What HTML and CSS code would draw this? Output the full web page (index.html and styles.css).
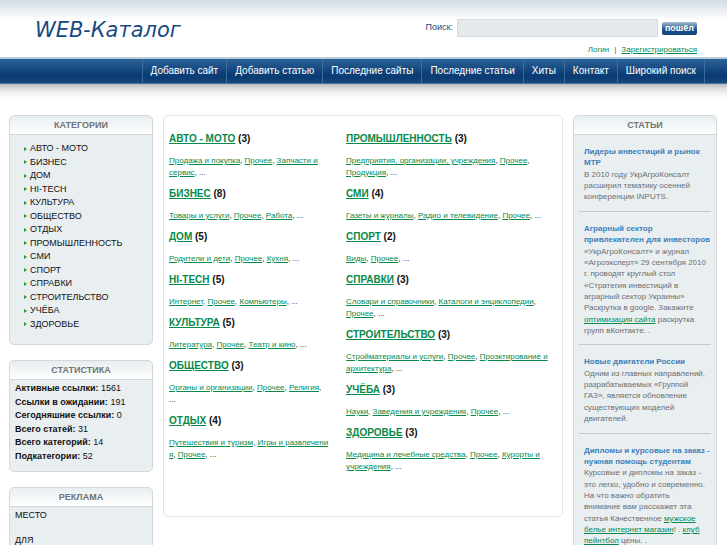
FILE: index.html
```html
<!DOCTYPE html>
<html lang="ru">
<head>
<meta charset="utf-8">
<title>WEB-Каталог</title>
<link rel="stylesheet" href="styles.css">
</head>
<body>
<header class="header">
  <h1 class="logo">WEB-Каталог</h1>
  <div class="tools">
    <form class="search">
      <label for="q">Поиск:</label>
      <input id="q" type="text" name="q">
      <button type="submit">пошёл</button>
    </form>
    <div class="account"><a class="plain" href="#">Логин</a><span>|</span><a href="#">Зарегистрироваться</a></div>
  </div>
</header>
<nav class="nav">
  <a href="#">Добавить сайт</a>
  <a href="#">Добавить статью</a>
  <a href="#">Последние сайты</a>
  <a href="#">Последние статьи</a>
  <a href="#">Хиты</a>
  <a href="#">Контакт</a>
  <a href="#">Широкий поиск</a>
</nav>
<div class="page">
  <aside class="side">
    <section class="box">
      <h2>КАТЕГОРИИ</h2>
      <ul class="cats">
        <li><a href="#">АВТО - МОТО</a></li>
        <li><a href="#">БИЗНЕС</a></li>
        <li><a href="#">ДОМ</a></li>
        <li><a href="#">HI-TECH</a></li>
        <li><a href="#">КУЛЬТУРА</a></li>
        <li><a href="#">ОБЩЕСТВО</a></li>
        <li><a href="#">ОТДЫХ</a></li>
        <li><a href="#">ПРОМЫШЛЕННОСТЬ</a></li>
        <li><a href="#">СМИ</a></li>
        <li><a href="#">СПОРТ</a></li>
        <li><a href="#">СПРАВКИ</a></li>
        <li><a href="#">СТРОИТЕЛЬСТВО</a></li>
        <li><a href="#">УЧЁБА</a></li>
        <li><a href="#">ЗДОРОВЬЕ</a></li>
      </ul>
    </section>
    <section class="box">
      <h2>СТАТИСТИКА</h2>
      <ul class="stats">
        <li><b>Активные ссылки:</b> 1561</li>
        <li><b>Ссылки в ожидании:</b> 191</li>
        <li><b>Сегодняшние ссылки:</b> 0</li>
        <li><b>Всего статей:</b> 31</li>
        <li><b>Всего категорий:</b> 14</li>
        <li><b>Подкатегории:</b> 52</li>
      </ul>
    </section>
    <section class="box">
      <h2>РЕКЛАМА</h2>
      <div class="ads">
        <p>МЕСТО</p>
        <p>ДЛЯ</p>
      </div>
    </section>
  </aside>
  <main class="directory">
    <div class="col">
      <h3><a href="#">АВТО - МОТО</a> (3)</h3>
      <p><a href="#">Продажа и покупка</a>, <a href="#">Прочее</a>, <a href="#">Запчасти и<br>сервис</a>, ...</p>
      <h3><a href="#">БИЗНЕС</a> (8)</h3>
      <p><a href="#">Товары и услуги</a>, <a href="#">Прочее</a>, <a href="#">Работа</a>, ...</p>
      <h3><a href="#">ДОМ</a> (5)</h3>
      <p><a href="#">Родители и дети</a>, <a href="#">Прочее</a>, <a href="#">Кухня</a>, ...</p>
      <h3><a href="#">HI-TECH</a> (5)</h3>
      <p><a href="#">Интернет</a>, <a href="#">Прочее</a>, <a href="#">Компьютеры</a>, ...</p>
      <h3><a href="#">КУЛЬТУРА</a> (5)</h3>
      <p><a href="#">Литература</a>, <a href="#">Прочее</a>, <a href="#">Театр и кино</a>, ...</p>
      <h3><a href="#">ОБЩЕСТВО</a> (3)</h3>
      <p><a href="#">Органы и организации</a>, <a href="#">Прочее</a>, <a href="#">Религия</a>,<br>...</p>
      <h3><a href="#">ОТДЫХ</a> (4)</h3>
      <p><a href="#">Путешествия и туризм</a>, <a href="#">Игры и развлечени<br>я</a>, <a href="#">Прочее</a>, ...</p>
    </div>
    <div class="col">
      <h3><a href="#">ПРОМЫШЛЕННОСТЬ</a> (3)</h3>
      <p><a href="#">Предприятия, организации, учреждения</a>, <a href="#">Прочее</a>,<br><a href="#">Продукция</a>, ...</p>
      <h3><a href="#">СМИ</a> (4)</h3>
      <p><a href="#">Газеты и журналы</a>, <a href="#">Радио и телевидение</a>, <a href="#">Прочее</a>, ...</p>
      <h3><a href="#">СПОРТ</a> (2)</h3>
      <p><a href="#">Виды</a>, <a href="#">Прочее</a>, ...</p>
      <h3><a href="#">СПРАВКИ</a> (3)</h3>
      <p><a href="#">Словари и справочники</a>, <a href="#">Каталоги и энциклопедии</a>,<br><a href="#">Прочее</a>, ...</p>
      <h3><a href="#">СТРОИТЕЛЬСТВО</a> (3)</h3>
      <p><a href="#">Стройматериалы и услуги</a>, <a href="#">Прочее</a>, <a href="#">Проэктирование и<br>архитектура</a>, ...</p>
      <h3><a href="#">УЧЁБА</a> (3)</h3>
      <p><a href="#">Науки</a>, <a href="#">Заведения и учреждения</a>, <a href="#">Прочее</a>, ...</p>
      <h3><a href="#">ЗДОРОВЬЕ</a> (3)</h3>
      <p><a href="#">Медицина и лечебные средства</a>, <a href="#">Прочее</a>, <a href="#">Курорты и<br>учреждения</a>, ...</p>
    </div>
  </main>
  <aside class="side">
    <section class="box">
      <h2>СТАТЬИ</h2>
      <div class="articles">
        <article><h4>Лидеры инвестиций и рынок<br>МТР</h4>
          <p>В 2010 году УкрАгроКонсалт<br>расширил тематику осенней<br>конференции INPUTS.</p></article>
        <article><h4>Аграрный сектор<br>привлекателен для инвесторов</h4>
          <p>«УкрАгроКонсалт» и журнал<br>«Агроэксперт» 29 сентября 2010<br>г. проводят круглый стол<br>«Стратегия инвестиций в<br>аграрный сектор Украины»<br>Раскрутка в google. Закажите<br><a href="#">оптимизация сайта</a> раскрутка<br>групп вКонтакте. .</p></article>
        <article><h4>Новые двигатели России</h4>
          <p>Одним из главных направлений,<br>разрабатываемых «Группой<br>ГАЗ», является обновление<br>существующих моделей<br>двигателей.</p></article>
        <article><h4>Дипломы и курсовые на заказ -<br>нужная помощь студентам</h4>
          <p>Курсовые и дипломы на заказ -<br>это легко, удобно и современно.<br>На что важно обратить<br>внимание вам расскажет эта<br>статья Качественное <a href="#">мужское<br>белье интернет магазин</a>! . <a href="#">клуб<br>пейнтбол</a> цены. .</p></article>
      </div>
    </section>
  </aside>
</div>
</body>
</html>
```
FILE: styles.css
```css
* { box-sizing: border-box; }
html { height: 100%; overflow: hidden; }
body {
  margin: 0;
  font: 9px/1.5 "Liberation Sans", Arial, sans-serif;
  color: #111;
  background: #fff;
}
h1, h2, h3, h4, p, ul { margin: 0; padding: 0; }
ul { list-style: none; }
a { color: #078a4b; }

.header {
  display: flex;
  justify-content: space-between;
  height: 57px;
  padding: 19px 30px 0 35px;
  background: linear-gradient(#d2dce4, #fff 20px);
}
.logo {
  font: italic 21px/23px "DejaVu Sans", sans-serif;
  color: #174a80;
}
.search { display: flex; align-items: center; color: #174a80; }
.search input {
  width: 201px;
  height: 18px;
  margin: 0 4px;
  border: 1px solid #d3dce3;
  background: #e3e9ed;
}
.search button {
  width: 35px;
  height: 13px;
  padding: 0;
  border: 0;
  border-radius: 2px;
  font: bold 9px/12px "Liberation Sans", Arial, sans-serif;
  color: #fff;
  background: linear-gradient(#a9bdd1, #1d4f86 60%, #124680);
}
.account {
  display: flex;
  justify-content: flex-end;
  gap: 5px;
  margin-top: 7px;
  font-size: 8px;
  color: #078a4b;
}
.plain { text-decoration: none; }

.nav {
  display: flex;
  justify-content: flex-end;
  height: 27px;
  padding-right: 22px;
  border-top: 2px solid #b5cadb;
  border-bottom: 1px solid #4d7299;
  background: linear-gradient(#2b6296, #0d3f76 60%, #0b3d74 80%, #174b82);
}
.nav a {
  padding: 0 8px;
  border-left: 1px solid #3c6c9b;
  font-size: 10px;
  line-height: 24px;
  color: #fff;
  text-decoration: none;
}
.nav a:last-child { border-right: 1px solid #3c6c9b; }

.page {
  display: flex;
  align-items: flex-start;
  gap: 10px;
  padding: 31px 10px 0 9px;
  background: linear-gradient(#bcbaba, #e3e2e2 5px, #f4f5f5 10px, #fff 17px);
}
.side { flex: 0 0 144px; }
.box {
  margin-bottom: 15px;
  border: 1px solid #d5d8da;
  border-radius: 5px;
  background: #e9eef1;
}
.box h2 {
  height: 19px;
  border-bottom: 1px solid #cfd5d9;
  border-radius: 5px 5px 0 0;
  font-size: 9px;
  line-height: 19px;
  text-align: center;
  color: #6f7375;
  background: linear-gradient(#e7edf0, #fff);
}
.cats { padding: 7px 0 13px 14px; }
.cats li { display: flex; align-items: center; gap: 3px; }
.cats li::before {
  content: "";
  border: 2px solid transparent;
  border-left: 3px solid #2e9440;
  border-right: 0;
}
.cats a { color: #111; text-decoration: none; }
.stats { padding: 2px 5px 8px; }
.ads { padding: 2px 5px; }
.ads p { margin-bottom: 11px; }

.directory {
  flex: 1;
  display: flex;
  min-width: 0;
  min-height: 402px;
  padding: 17px 5px 0;
  border: 1px solid #e2e4e5;
  border-radius: 5px;
  white-space: nowrap;
}
.col { flex: 0 0 177px; min-width: 0; line-height: 12px; }
.col h3 { font-size: 10px; line-height: 12px; }
.col p { margin: 10px 0 9px; font-size: 8px; }

.articles {
  padding: 11px 5px;
  line-height: 1.42;
  font-size: 8px;
  color: #6c7072;
  white-space: nowrap;
}
.articles article {
  margin-bottom: 11px;
  padding: 0 0 8px 5px;
  border-bottom: 1px solid #c5cacd;
}
.articles h4 { font-size: 8px; color: #3b80b8; }
```
